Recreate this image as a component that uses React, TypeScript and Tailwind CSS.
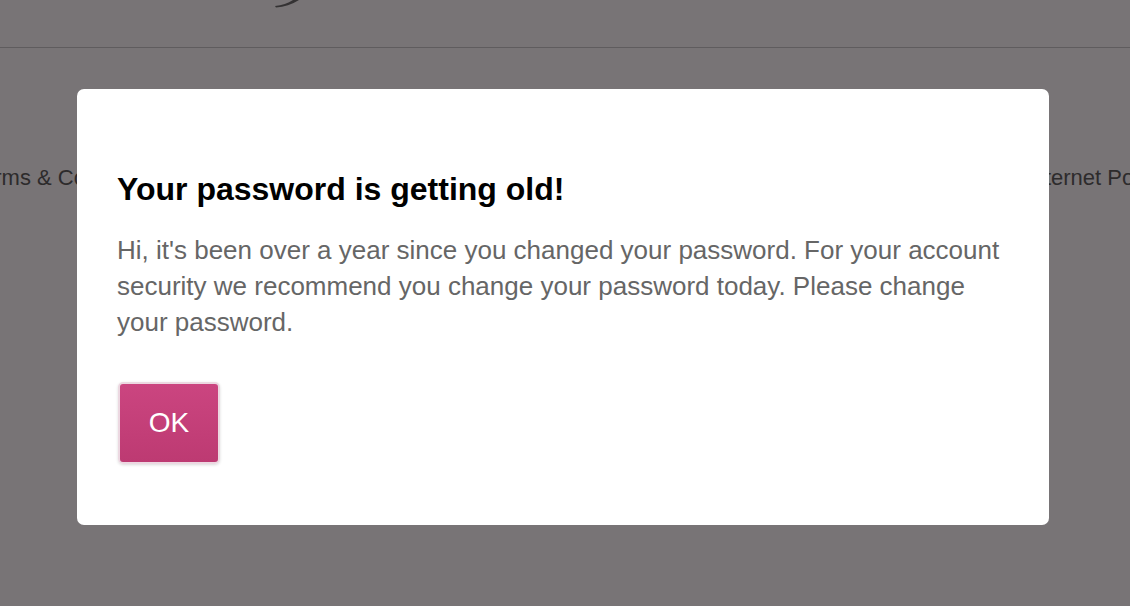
export default function App() {
  return (
    <div className="relative h-[606px] w-[1130px] overflow-hidden bg-[#787476] font-['Liberation_Sans',Arial,sans-serif]">
      {/* page behind the overlay */}
      <div className="h-[48px] border-b border-[#5f5c5e]">
        <svg width="30" height="8" viewBox="0 0 30 8" className="ml-[272px]">
          <path d="M3 6 C10 5.5 16 3 21 0 L27 0 C20 4.5 12 7 4 7.5 Z" fill="#343233" />
        </svg>
      </div>
      <div className="flex justify-between pt-[115px] text-[22px] leading-[30px] text-[#2d2b2c]">
        <span className="-ml-[29px]">Terms &amp; Conditions</span>
        <span className="-mr-[36px]">Internet Policy</span>
      </div>

      {/* modal */}
      <div className="absolute left-[77px] top-[89px] h-[436px] w-[972px] rounded-[7px] bg-white px-[40px] pt-[82px]">
        <h2 className="text-[32px] font-bold leading-[36px] text-black">Your password is getting old!</h2>
        <p className="mt-[25px] max-w-[892px] text-[26px] leading-[36px] text-[#666666]">
          Hi, it's been over a year since you changed your password. For your account security we recommend you change your password today. Please change your password.
        </p>
        <button className="mt-[42px] ml-[1px] flex h-[82px] w-[102px] items-center justify-center rounded-[5px] border-[2px] border-[#ecd8e1] bg-gradient-to-b from-[#cb4580] to-[#bd3a72] text-[28px] text-white shadow-[0_1px_3px_rgba(0,0,0,0.15)]">
          OK
        </button>
      </div>
    </div>
  );
}
